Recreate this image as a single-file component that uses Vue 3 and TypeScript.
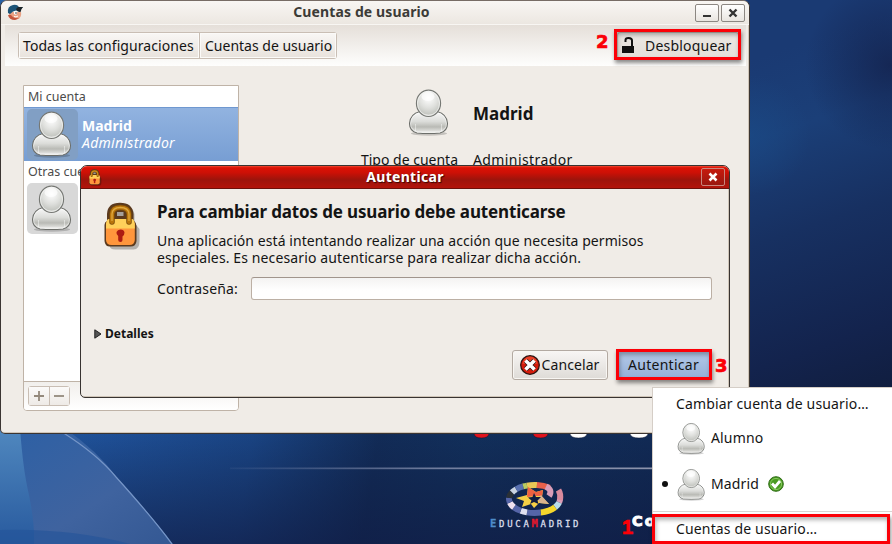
<script setup lang="ts">
import { ref } from 'vue'

interface Session {
  name: string
  active: boolean
}

interface RingSegment {
  from: number
  to: number
  color: string
}

const crumbs: string[] = ['Todas las configuraciones', 'Cuentas de usuario']
const sessions: Session[] = [
  { name: 'Alumno', active: false },
  { name: 'Madrid', active: true },
]
const password = ref('')

// Percentages run clockwise from the rightmost point of the logo ring.
const ring: RingSegment[] = [
  { from: 0, to: 3, color: '#d99db8' },
  { from: 3, to: 8, color: '#b9dcea' },
  { from: 8, to: 20, color: '#f5d72c' },
  { from: 20, to: 31, color: '#5565a8' },
  { from: 31, to: 36, color: '#dfe0f0' },
  { from: 36, to: 42, color: '#5565a8' },
  { from: 42, to: 47, color: '#eee0ee' },
  { from: 47, to: 51, color: '#5565a8' },
  { from: 51, to: 56, color: '#2a3036' },
  { from: 56, to: 60, color: '#c9d3e1' },
  { from: 60, to: 66, color: '#5870b0' },
  { from: 66, to: 69, color: '#b9cc60' },
  { from: 69, to: 77, color: '#e9c655' },
  { from: 77, to: 87, color: '#e8604a' },
]
</script>

<template>
  <div class="desktop">
    <svg class="wallpaper" viewBox="0 0 892 544" aria-hidden="true">
      <defs>
        <linearGradient id="bgRight" gradientUnits="userSpaceOnUse" x1="750" y1="60" x2="880" y2="430">
          <stop offset="0" stop-color="#1a3a73" />
          <stop offset=".2" stop-color="#1b3f78" />
          <stop offset=".45" stop-color="#173061" />
          <stop offset=".75" stop-color="#13234d" />
          <stop offset="1" stop-color="#0f1b38" />
        </linearGradient>
        <radialGradient id="bgDusk" gradientUnits="userSpaceOnUse" cx="890" cy="65" r="85">
          <stop offset="0" stop-color="#13204a" stop-opacity=".75" />
          <stop offset="1" stop-color="#13204a" stop-opacity="0" />
        </radialGradient>
        <radialGradient id="bgGlow" gradientUnits="userSpaceOnUse" cx="750" cy="135" r="60">
          <stop offset="0" stop-color="#1a4a86" stop-opacity=".7" />
          <stop offset="1" stop-color="#1a4a86" stop-opacity="0" />
        </radialGradient>
        <linearGradient id="bgBottom" x1="0" x2="1" y1="0" y2=".1">
          <stop offset="0" stop-color="#2660a5" />
          <stop offset=".2" stop-color="#1f5199" />
          <stop offset=".36" stop-color="#1a4585" />
          <stop offset=".5" stop-color="#122c58" />
          <stop offset=".6" stop-color="#12305c" />
          <stop offset="1" stop-color="#102650" />
        </linearGradient>
        <linearGradient id="bgShade" x1="0" x2="0" y1="0" y2="1">
          <stop offset="0" stop-color="#0e1838" stop-opacity="0" />
          <stop offset="1" stop-color="#101a42" stop-opacity=".65" />
        </linearGradient>
        <linearGradient id="bgPetal" x1="0" x2="1" y1="0" y2="1">
          <stop offset="0" stop-color="#2c60a5" />
          <stop offset=".6" stop-color="#3f639f" />
          <stop offset="1" stop-color="#345893" />
        </linearGradient>
        <linearGradient id="bgEdge" x1="0" x2="0" y1="0" y2="1">
          <stop offset="0" stop-color="#5088bf" />
          <stop offset="1" stop-color="#285a9e" />
        </linearGradient>
        <linearGradient id="bgLine" x1="0" x2="1" y1="0" y2="0">
          <stop offset="0" stop-color="#7c8bb0" stop-opacity=".1" />
          <stop offset=".5" stop-color="#7c87a6" stop-opacity=".9" />
          <stop offset="1" stop-color="#8d94ac" />
        </linearGradient>
        <radialGradient id="headFill" cx=".5" cy=".3" r=".75">
          <stop offset="0" stop-color="#ffffff" />
          <stop offset=".5" stop-color="#dfe0dd" />
          <stop offset=".8" stop-color="#c6c8c3" />
          <stop offset="1" stop-color="#f1f1ef" />
        </radialGradient>
        <linearGradient id="bodyFill" x1="0" x2="0" y1="0" y2="1">
          <stop offset="0" stop-color="#fafafa" />
          <stop offset=".45" stop-color="#dcddda" />
          <stop offset=".7" stop-color="#b9bab5" />
          <stop offset="1" stop-color="#f4f4f2" />
        </linearGradient>
        <symbol id="person" viewBox="0 0 42 48">
          <ellipse cx="21" cy="45.5" rx="18" ry="2.2" fill="#000" opacity=".18" />
          <path d="M9 45 Q1.500 43 1.500 35.500 Q2 26 12 23.500 H29 Q39 26 39.500 35.500 Q39.500 43 32 45 Q20.500 46 9 45Z" fill="url(#bodyFill)" stroke="#6c6e6a" stroke-width="1.100" />
          <path d="M9.500 44 Q2.600 42 2.600 35.500 Q3 27 12 24.600 H29 Q38 27 38.400 35.500 Q38.400 42 31.500 44Z" fill="none" stroke="#fff" stroke-opacity=".5" />
          <path d="M7.500 36V43M33.500 36V43" stroke="#fff" stroke-opacity=".45" />
          <ellipse cx="20.500" cy="15.300" rx="12.100" ry="13.200" fill="url(#headFill)" stroke="#757773" stroke-width="1.100" />
          <ellipse cx="20.500" cy="15.300" rx="11" ry="12.100" fill="none" stroke="#fff" stroke-opacity=".55" />
          <ellipse cx="20" cy="8.500" rx="6.500" ry="4.500" fill="#fff" opacity=".65" />
        </symbol>
        <symbol id="padlock" viewBox="0 0 36 48">
          <path d="M6 20V13Q6 3 17.500 3Q29 3 29 13V20L34 26V38Q34 46.500 28 46.500H10Q4 46.500 4 42Z" fill="#000" opacity=".25" transform="translate(2 1)" />
          <path d="M3.500 19V12Q4 .8 16.500 .8Q29 .8 30 12V18Q33 21 33 24V39Q32.500 44.500 27 44.500H6.500Q1.500 44.500 1 39V23Q1 20 3.500 19Z" fill="#5b3a1e" />
          <path d="M2.500 22Q3 19.500 5 19H29Q31 20 31.300 22V38Q31 43 26 43H8Q2.800 43 2.500 38Z" fill="#ff963c" />
          <path d="M2.500 22Q3 17.500 5 17H29Q31 18 31.300 22V26.500H2.500Z" fill="#ffd05a" />
          <path d="M8.500 20V12Q9 5.500 16.800 5.500Q25 5.500 25.500 12V20" fill="none" stroke="#7c4c09" stroke-width="5.500" stroke-linecap="round" />
          <path d="M8.500 20V12Q9 5.500 16.800 5.500Q25 5.500 25.500 12V20" fill="none" stroke="#b9750b" stroke-width="4" stroke-linecap="round" />
          <path d="M8.500 19V12Q9 5.500 16.800 5.500Q25 5.500 25.500 12V19" fill="none" stroke="#e0aa40" stroke-width="1.300" />
          <rect x="13.500" y="10" width="6.500" height="4" fill="#a5a09b" />
          <path d="M14.700 34Q12.500 32 13 30Q14 27.500 17 27.500Q20.500 27.500 21 30.500Q21 33 19 34.500V38Q19 40 17 40Q14.700 40 14.700 38Z" fill="#ad1c12" />
        </symbol>
      </defs>
      <rect width="892" height="544" fill="url(#bgBottom)" />
      <rect x="740" width="152" height="544" fill="url(#bgRight)" />
      <rect x="740" width="152" height="200" fill="url(#bgDusk)" />
      <rect x="740" width="152" height="200" fill="url(#bgGlow)" />
      <rect y="428" width="740" height="116" fill="url(#bgShade)" />
      <path d="M0 428H64Q97 450 118 479Q155 520 173 544H0Z" fill="url(#bgPetal)" />
      <path d="M62 432Q97 454 116 477Q153 518 172 544" fill="none" stroke="#7696c8" stroke-width="1.200" />
      <path d="M0 428H20Q23 470 29 495Q35 525 34 544H0Z" fill="url(#bgEdge)" />
      <path d="M0 530Q70 528 130 544H0Z" fill="#235399" opacity=".6" />
      <rect x="230" y="467.500" width="424" height="1.700" fill="url(#bgLine)" />
      <g stroke="#0a1430" stroke-opacity=".5">
        <path d="M474 430H489V434Q488 438 481.500 438Q475 438 474 434Z" fill="#e1131d" />
        <path d="M533 430H548V434Q547 438 540.500 438Q534 438 533 434Z" fill="#e1131d" />
        <path d="M570 430H587V434Q586 438 578.500 438Q571 438 570 434Z" fill="#fff" />
        <path d="M630 430H648V434Q647 438 639 438Q631 438 630 434Z" fill="#fff" />
      </g>
      <g fill="none" stroke-width="6">
        <ellipse
          v-for="s in ring"
          :key="s.from"
          cx="534.500"
          cy="499"
          rx="25.500"
          ry="14"
          pathLength="100"
          :stroke="s.color"
          :stroke-dasharray="`${s.to - s.from} 100`"
          :stroke-dashoffset="-s.from"
        />
        <path d="M546 486.500Q553 490 549 496" stroke="#d99db8" />
        <path d="M558.500 490Q561 494 560 500" stroke="#d98a9d" />
      </g>
      <path d="M528 487L536 492L543 490L542 497L549 504L539 503L534 508L531 504L522 507L524 501L516 498L527 495Z" fill="#f5d045" />
      <path d="M528 487L536 492L543 490L542 496L535 496L527 497Z" fill="#ed6142" />
      <path d="M541 495L549 504L540 503L537 499Z" fill="#d9b48d" />
      <path d="M534 493L536 497L541 497L537.500 500.500L538.500 504L534 502L530 504L531.500 500.500L528 497.500L532.500 497Z" fill="#101d40" />
    </svg>

    <div class="brand"><span class="blue">E</span>DUCA<span class="red">M</span>ADRID</div>
    <div class="clipped-caption">Co</div>

    <section class="window settings">
      <header class="titlebar">
        <svg class="app-icon" viewBox="0 0 17 17">
          <path d="M2 8L14 8Q15 13 11 15Q5 17 2 12Z" fill="#e9a184" />
          <path d="M1 11Q2 16 8 16L13 14Q7 15 4 11Z" fill="#c3543c" />
          <path d="M1 9Q0 2 6 1Q10 0 12 3L16 3Q13 5 13 8Q8 4 3 10Z" fill="#1d5477" />
          <path d="M11 3L16 3Q14 5 13.500 8Q10 8 9 5Z" fill="#1c2327" />
          <ellipse cx="8.500" cy="8.800" rx="1.700" ry="1.900" fill="#fff" />
          <circle cx="9" cy="9" r=".8" fill="#333" />
          <path d="M7 12.500Q9 13.500 11 12" fill="none" stroke="#fff" />
        </svg>
        <h1>Cuentas de usuario</h1>
        <div class="controls">
          <button class="ctl"><svg viewBox="0 0 22 16"><path d="M7 11H15" stroke="#333" stroke-width="2" /></svg></button>
          <button class="ctl"><svg viewBox="0 0 22 16"><path d="M7.500 4.500L14.500 11.500M14.500 4.500L7.500 11.500" stroke="#333" stroke-width="2.400" /></svg></button>
        </div>
      </header>

      <div class="toolbar">
        <nav class="crumbs">
          <button v-for="(c, i) in crumbs" :key="c" :class="['crumb', 'crumb-' + i]"><span>{{ c }}</span></button>
        </nav>
        <button class="unlock">
          <svg viewBox="0 0 14 17"><path d="M0 9H12V16H0Z" fill="#111" /><path d="M3.500 5V3Q3.500 1 6.500 1Q10 1 10 3.500V9" fill="none" stroke="#111" stroke-width="2" /></svg>
          <span>Desbloquear</span>
        </button>
      </div>

      <div class="content">
        <aside class="accounts">
          <div class="group first"><span>Mi cuenta</span></div>
          <div class="account selected">
            <div class="avatar"><svg class="person"><use href="#person" /></svg></div>
            <div class="who">
              <strong>Madrid</strong>
              <em>Administrador</em>
            </div>
          </div>
          <div class="group"><span>Otras cuentas</span></div>
          <div class="account">
            <div class="avatar"><svg class="person"><use href="#person" /></svg></div>
          </div>
          <footer class="list-actions">
            <div class="pair">
              <button><svg viewBox="0 0 12 12"><path d="M1 6H11M6 1V11" stroke="#94897c" stroke-width="1.800" /></svg></button>
              <button><svg viewBox="0 0 12 12"><path d="M1 6H11" stroke="#94897c" stroke-width="1.800" /></svg></button>
            </div>
          </footer>
        </aside>
        <main class="details">
          <svg class="person"><use href="#person" /></svg>
          <strong class="full-name">Madrid</strong>
          <span class="label">Tipo de cuenta</span>
          <span class="value">Administrador</span>
        </main>
      </div>
    </section>

    <section class="window dialog">
      <header class="dialog-bar">
        <svg class="lock-small"><use href="#padlock" /></svg>
        <h2>Autenticar</h2>
        <button class="dialog-close"><svg viewBox="0 0 22 16"><path d="M7.500 4.500L14.500 11.500M14.500 4.500L7.500 11.500" stroke="#fff" stroke-width="2.600" /></svg></button>
      </header>
      <div class="dialog-body">
        <svg class="lock-big"><use href="#padlock" /></svg>
        <div class="message">
          <h3>Para cambiar datos de usuario debe autenticarse</h3>
          <p class="line-a">Una aplicación está intentando realizar una acción que necesita permisos</p>
          <p class="line-b">especiales. Es necesario autenticarse para realizar dicha acción.</p>
          <label class="field">
            <span>Contraseña:</span>
            <input v-model="password" type="password" />
          </label>
        </div>
      </div>
      <div class="expander">
        <svg viewBox="0 0 8 10"><path d="M.8 .8L7 5L.8 9.200Z" fill="#555" stroke="#222" /></svg>
        <span>Detalles</span>
      </div>
      <div class="actions">
        <button class="btn cancel">
          <svg viewBox="0 0 20 20">
            <circle cx="10" cy="10" r="9.300" fill="#d51c0c" stroke="#2b1513" stroke-width="1.300" />
            <path d="M2.500 9A7.500 7.500 0 0 1 17.500 9Z" fill="#f35a3e" opacity=".6" />
            <path d="M5.800 5.800L14.200 14.200M14.200 5.800L5.800 14.200" stroke="#2b1513" stroke-width="5" />
            <path d="M5.500 5.500L14.500 14.500M14.500 5.500L5.500 14.500" stroke="#fff" stroke-width="3.600" />
          </svg>
          <span>Cancelar</span>
        </button>
        <button class="btn ok"><span>Autenticar</span></button>
      </div>
    </section>

    <ul class="menu">
      <li class="item switch"><span>Cambiar cuenta de usuario…</span></li>
      <li v-for="s in sessions" :key="s.name" class="item session">
        <i class="mark"><b v-if="s.active"></b></i>
        <svg class="person-small"><use href="#person" /></svg>
        <span>{{ s.name }}</span>
        <svg v-if="s.active" class="check" viewBox="0 0 16 16">
          <circle cx="8" cy="8" r="7.300" fill="#4a9a22" stroke="#2f6d16" />
          <circle cx="8" cy="8" r="5.600" fill="none" stroke="#86c85c" />
          <path d="M4 7.500L7 10.800L12 5" fill="none" stroke="#fff" stroke-width="2.800" />
        </svg>
      </li>
      <li class="separator"></li>
      <li class="item open-accounts"><span>Cuentas de usuario…</span></li>
    </ul>

    <div class="frame frame-1"></div>
    <div class="frame frame-2"></div>
    <div class="frame frame-3"></div>
    <b class="step step-1">1</b>
    <b class="step step-2">2</b>
    <b class="step step-3">3</b>
  </div>
</template>

<style>
body {
  margin: 0;
  overflow: hidden;
}
</style>

<style scoped>
.desktop {
  position: relative;
  width: 892px;
  height: 544px;
  overflow: hidden;
  background: #14284f;
  font: 14px/18px 'Noto Sans', sans-serif;
  color: #141414;
}
.desktop * {
  box-sizing: border-box;
}
button {
  font: inherit;
  color: inherit;
  padding: 0;
  margin: 0;
}
h1, h2, h3, p, ul {
  margin: 0;
  padding: 0;
}
span, h1, h2, h3, p, strong, em {
  white-space: nowrap;
}
.wallpaper {
  position: absolute;
  inset: 0;
  width: 892px;
  height: 544px;
}
.person {
  display: block;
  width: 42px;
  height: 48px;
}
.brand {
  position: absolute;
  left: 490px;
  top: 515px;
  font: 9px/16px 'DejaVu Sans Mono', monospace;
  letter-spacing: 2.7px;
  color: #d8dcea;
  -webkit-text-stroke: .3px;
}
.brand .blue { color: #4f8cc9; }
.brand .red { color: #e2182c; }
.brand .blue, .brand .red {
  font-size: 10.500px;
  font-weight: bold;
}
.clipped-caption {
  position: absolute;
  left: 632px;
  top: 512px;
  font: bold 14.500px/18px 'DejaVu Sans', sans-serif;
  letter-spacing: 2px;
  color: #fff;
  -webkit-text-stroke: 1px #fff;
}

/* Settings window */
.window {
  position: absolute;
  display: flex;
  flex-direction: column;
}
.settings {
  left: 0;
  top: 0;
  width: 750px;
  height: 434px;
  border: 1px solid #3b3532;
  border-top-color: #776c65;
  border-radius: 7px 7px 5px 5px;
  background: #f0ece7;
  box-shadow: inset -1px -1px #cfc5b8;
}
.titlebar {
  display: flex;
  align-items: center;
  height: 24px;
  flex: none;
  padding: 0 4px 0 6px;
  background: linear-gradient(#f8f6f3, #ece7e1);
  border-bottom: 1px solid #f8f6f3;
  border-radius: 6px 6px 0 0;
}
.app-icon {
  width: 17px;
  height: 17px;
}
.titlebar h1 {
  flex: 1;
  padding: 0 0 1px 4px;
  text-align: center;
  font-size: 14px;
  line-height: 20px;
  letter-spacing: .12px;
  color: #3c3b37;
}
.controls {
  display: flex;
  gap: 2px;
}
.ctl {
  width: 24px;
  height: 18px;
  border: 1px solid #8c8782;
  border-radius: 2px;
  background: linear-gradient(#fff, #e9e5e0);
}
.ctl svg, .dialog-close svg {
  display: block;
  width: 22px;
  height: 16px;
}
.toolbar {
  display: flex;
  justify-content: space-between;
  align-items: flex-start;
  height: 41px;
  flex: none;
  margin: 0 3px 0 4px;
  padding: 7px 7px 0 13px;
  background: linear-gradient(#e5dfd9, #fefefd);
}
.crumbs {
  display: flex;
  border: 1px solid #c9beb4;
  border-radius: 3px;
}
.crumb {
  display: flex;
  align-items: center;
  height: 25px;
  padding-left: 5px;
  border: 0;
  background: linear-gradient(#f9f7f5, #e8e2dc);
  box-shadow: inset 0 0 0 1px #fbfaf8;
}
.crumb-0 {
  width: 181px;
  padding-left: 4px;
  border-right: 1px solid #c9beb4;
  letter-spacing: .08px;
}
.crumb-1 { width: 136px; }
.unlock {
  display: flex;
  align-items: center;
  width: 122px;
  height: 27px;
  padding-left: 5px;
  gap: 9px;
  border: 1px solid #c5bdb5;
  border-radius: 3px;
  background: linear-gradient(#ece8e4, #e4dfd9);
  letter-spacing: .2px;
}
.unlock svg {
  width: 14px;
  height: 17px;
  margin-left: -1px;
  flex: none;
}
.content {
  display: flex;
  flex: 1;
  padding: 19px 22px 22px 22px;
}
.accounts {
  display: flex;
  flex-direction: column;
  width: 216px;
  height: 326px;
  border: 1px solid #bfb3a7;
  border-radius: 0 0 4px 4px;
  background: #fff;
}
.group {
  height: 21px;
  padding-left: 4px;
  font-size: 12.500px;
  line-height: 22px;
  color: #4b4b4b;
}
.account {
  display: flex;
  height: 54px;
  padding: 1px 3px;
}
.account.selected {
  border-top: 1px solid #6f98d0;
  padding-top: 0;
  background: linear-gradient(#92b3e0, #779ed3);
  color: #fff;
}
.avatar {
  width: 51px;
  height: 51px;
  padding: 1px 4px;
  border-radius: 5px;
  background: #d8d8d8;
}
.selected .avatar {
  margin-top: 1px;
  background: #819fc4;
}
.who {
  display: flex;
  flex-direction: column;
  padding: 9px 0 0 4px;
  line-height: 17px;
}
.who em { letter-spacing: .3px; }
.list-actions {
  margin-top: auto;
  height: 29px;
  padding: 4px;
  border-top: 1px solid #bfb3a7;
  border-radius: 0 0 3px 3px;
  background: linear-gradient(#f1efec, #fff);
}
.pair {
  display: flex;
  width: 42px;
  height: 20px;
  border: 1px solid #c9beb4;
  border-radius: 3px;
}
.pair button {
  flex: 1;
  display: grid;
  place-items: center;
  border: 0;
  background: linear-gradient(#fbfaf9, #eeeae6);
}
.pair button + button { border-left: 1px solid #c9beb4; }
.pair svg { width: 12px; height: 12px; }
.details {
  display: grid;
  grid-template-columns: 101px 1fr;
  grid-template-rows: 50px 26px;
  column-gap: 12px;
  align-content: start;
  padding: 3px 0 0 121px;
  row-gap: 13px;
}
.details .person {
  justify-self: end;
  margin-right: 11px;
}
.full-name {
  font-size: 17px;
  line-height: 50px;
  padding-top: 1px;
}
.label {
  justify-self: end;
  padding-right: 3px;
}
.value { letter-spacing: .4px; }

/* Authentication dialog */
.dialog {
  left: 80px;
  top: 165px;
  width: 650px;
  height: 233px;
  border: 1px solid #383331;
  border-radius: 7px 7px 5px 5px;
  background: #f0ece7;
  box-shadow: inset -1px -1px #cfc5b8;
}
.dialog-bar {
  display: flex;
  align-items: center;
  height: 23px;
  flex: none;
  padding: 0 4px 0 7px;
  border-bottom: 1px solid #6d110b;
  border-radius: 6px 6px 0 0;
  background: linear-gradient(#f04a32 0, #dc1205 8%, #cd1006 30%, #9d140c 62%, #b3140b);
}
.lock-small {
  width: 14px;
  height: 17px;
  margin-top: 1px;
}
.dialog-bar h2 {
  flex: 1;
  text-align: center;
  padding-left: 7px;
  font-size: 14px;
  line-height: 20px;
  letter-spacing: .3px;
  color: #fff;
  text-shadow: 1px 1px 1px #3a0502;
}
.dialog-close {
  width: 24px;
  height: 18px;
  border: 1px solid #c9857c;
  border-radius: 2px;
  background: linear-gradient(#c71a0e, #9a170f);
}
.dialog-body {
  display: flex;
  padding: 11px 17px 0 22px;
}
.lock-big {
  width: 37px;
  height: 48px;
  flex: none;
  margin-top: 2px;
}
.message {
  flex: 1;
  padding-left: 17px;
}
.message h3 {
  margin-bottom: 8px;
  font-size: 17px;
  line-height: 24px;
  letter-spacing: -.15px;
}
.message p { line-height: 17px; }
.line-a { letter-spacing: .07px; }
.line-b { letter-spacing: .12px; }
.field {
  display: flex;
  align-items: center;
  justify-content: space-between;
  margin-top: 11px;
  letter-spacing: .15px;
}
.field input {
  width: 461px;
  height: 23px;
  border: 1px solid #bcb0a5;
  border-top-color: #a1958c;
  border-radius: 3px;
  background: linear-gradient(#f4f3f2, #fff 60%);
  outline: 0;
}
.expander {
  display: flex;
  align-items: center;
  gap: 3px;
  margin-top: 25px;
  padding-left: 13px;
  font-size: 12px;
  font-weight: bold;
}
.expander svg { width: 8px; height: 10px; }
.actions {
  display: flex;
  justify-content: flex-end;
  gap: 8px;
  margin-top: 7px;
  padding-right: 17px;
}
.btn {
  display: flex;
  align-items: center;
  justify-content: center;
  width: 96px;
  height: 30px;
  border: 1px solid #b3aaa2;
  border-radius: 3px;
  background: linear-gradient(#f8f6f4, #dedbd7);
  box-shadow: inset 0 0 0 1px #f8f6f3;
}
.cancel { gap: 1px; letter-spacing: .1px; }
.cancel svg { width: 20px; height: 20px; }
.ok {
  padding-right: 1px;
  border-color: #7d9cc6;
  background: linear-gradient(#b4cae8, #94afd8);
  box-shadow: none;
  letter-spacing: .28px;
}

/* Session menu */
.menu {
  position: absolute;
  left: 652px;
  top: 387px;
  width: 240px;
  height: 157px;
  padding-top: 4px;
  list-style: none;
  background: #fff;
  border: solid #d5cec7;
  border-width: 1px 0 0 1px;
}
.item {
  display: flex;
  align-items: center;
  height: 30px;
  padding-left: 23px;
  letter-spacing: .15px;
}
.item.switch { height: 23px; }
.item.session { height: 46px; padding-left: 0; }
.item.open-accounts { height: 28px; }
.mark {
  width: 24px;
  padding-left: 9px;
  height: 6px;
}
.mark b {
  display: block;
  width: 6px;
  height: 6px;
  border-radius: 50%;
  background: #111;
}
.person-small {
  width: 29px;
  height: 33px;
  margin-right: 5px;
}
.check {
  width: 16px;
  height: 16px;
  margin-left: 9px;
}
.separator {
  height: 1px;
  margin: 4px 0 3px;
  background: #d9d5d2;
}

/* Numbered callouts */
.frame {
  position: absolute;
  border: 3px solid #fb0007;
  box-shadow: 1px 3px 4px rgba(0, 0, 0, .45), inset 1px 3px 4px rgba(0, 0, 0, .3);
}
.frame-1 { left: 652px; top: 514px; width: 238px; height: 30px; }
.frame-2 { left: 614px; top: 29px; width: 127px; height: 31px; }
.frame-3 { left: 616px; top: 349px; width: 96px; height: 31px; }
.step {
  position: absolute;
  font: bold 18px/18px 'DejaVu Sans', sans-serif;
  color: #fb0007;
  -webkit-text-stroke: .7px #fb0007;
}
.step-1 {
  left: 622px;
  top: 518px;
  font-family: 'Liberation Sans', sans-serif;
  font-size: 20px;
}
.step-2 { left: 596px; top: 33px; }
.step-3 { left: 715px; top: 357px; }
</style>
